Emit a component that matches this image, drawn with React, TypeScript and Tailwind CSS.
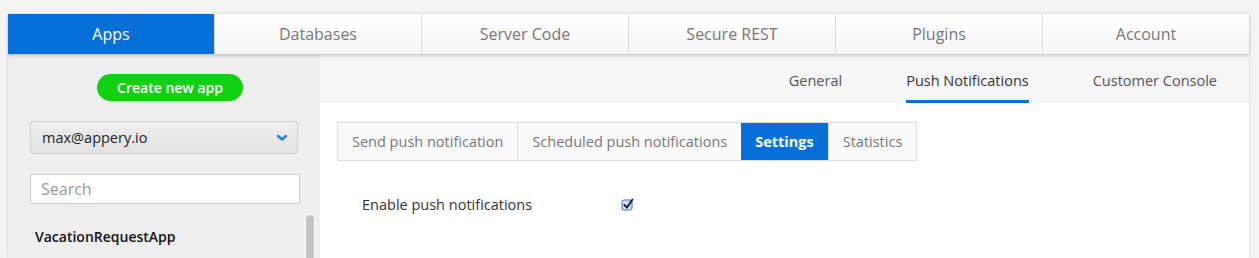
import React from "react"

const topTabs = ["Apps", "Databases", "Server Code", "Secure REST", "Plugins", "Account"]
const subTabs = ["General", "Push Notifications", "Customer Console"]
const pushTabs = ["Send push notification", "Scheduled push notifications", "Settings", "Statistics"]

const App = () => {
  return (
    <div
      className="w-full h-[258px] overflow-hidden bg-[#f3f3f3] pt-[14px] pl-[8px]"
      style={{ fontFamily: '"Open Sans", "Noto Sans", sans-serif' }}
    >
      <div className="w-[1241px] shadow-[0_0_3px_rgba(0,0,0,0.15)]">
        {/* top nav */}
        <div className="flex h-[40px] relative z-10 shadow-[0_2px_3px_rgba(0,0,0,0.18)]">
          {topTabs.map((tab, idx) => (
            <div
              key={tab}
              className={
                idx === 0
                  ? "flex-1 flex items-center justify-center bg-[#0670d8] text-white text-[16px]"
                  : "flex-1 flex items-center justify-center border-l border-[#dcdcdc] bg-gradient-to-b from-white to-[#f6f6f6] text-[#777] text-[16px]"
              }
            >
              {tab}
            </div>
          ))}
        </div>

        <div className="flex h-[204px]">
          {/* sidebar */}
          <div className="w-[312px] bg-[#eeeeee] relative">
            <div className="ml-[89px] mt-[20px] w-[146px] h-[27px] rounded-full bg-[#12d112] text-white text-[14px] font-semibold flex items-center justify-center">
              Create new app
            </div>
            <div className="ml-[22px] mt-[20px] w-[268px] h-[33px] rounded-[3px] border border-[#cfcfcf] bg-gradient-to-b from-[#efefef] to-[#e2e2e2] flex items-center justify-between pl-[11px] pr-[9px] text-[14.5px] text-[#222]">
              <span>max@appery.io</span>
              <svg width="12" height="8" viewBox="0 0 12 8">
                <path d="M2 2 L6 5.5 L10 2" stroke="#1d7fe0" strokeWidth="2.4" fill="none" strokeLinecap="round" />
              </svg>
            </div>
            <div className="ml-[22px] mt-[20px] w-[270px] h-[30px] border border-[#cccccc] bg-white flex items-center pl-[10px] text-[16px] text-[#999]">
              Search
            </div>
            <div className="ml-[27px] mt-[22px] text-[14px] font-semibold text-[#111]">VacationRequestApp</div>
            <div className="absolute left-[297px] top-[160px] w-[10px] h-[60px] rounded-full bg-[#c2c2c2] border border-white" />
          </div>

          {/* main */}
          <div className="flex-1 bg-white">
            <div className="h-[49px] bg-[#f6f6f6] flex justify-end">
              {subTabs.map((tab, idx) => (
                <div key={tab} className="px-8 h-full flex flex-col justify-end">
                  <div className={idx === 1 ? "text-[14.5px] text-[#333] pb-[8px] border-b-[3px] border-[#0670d8]" : "text-[14.5px] text-[#555] pb-[11px]"}>
                    {tab}
                  </div>
                </div>
              ))}
            </div>

            <div className="ml-[17px] mt-[19px] flex h-[39px] w-fit border border-[#dddddd]">
              {pushTabs.map((tab, idx) => (
                <div
                  key={tab}
                  className={
                    idx === 2
                      ? "px-[14px] flex items-center bg-[#0670d8] text-white font-bold text-[14.5px]"
                      : idx === 0
                      ? "px-[14px] flex items-center bg-[#fafafa] text-[#777] text-[14.5px]"
                      : "px-[14px] flex items-center bg-[#fafafa] text-[#777] text-[14.5px] border-l border-[#dddddd]"
                  }
                >
                  {tab}
                </div>
              ))}
            </div>

            <div className="ml-[42px] mt-[33px] flex items-center text-[14.5px] text-[#333]">
              <span className="w-[259px]">Enable push notifications</span>
              <svg width="13" height="13" viewBox="0 0 13 13">
                <rect x="1" y="2" width="10" height="10" rx="2" fill="#cfe2fb" stroke="#4d6a95" strokeWidth="1" />
                <path d="M3.5 7 L6 9.5 L11.5 1.5" stroke="#16213a" strokeWidth="2" fill="none" strokeLinecap="round" strokeLinejoin="round" />
              </svg>
            </div>
          </div>
        </div>
      </div>
    </div>
  )
}

export default App
